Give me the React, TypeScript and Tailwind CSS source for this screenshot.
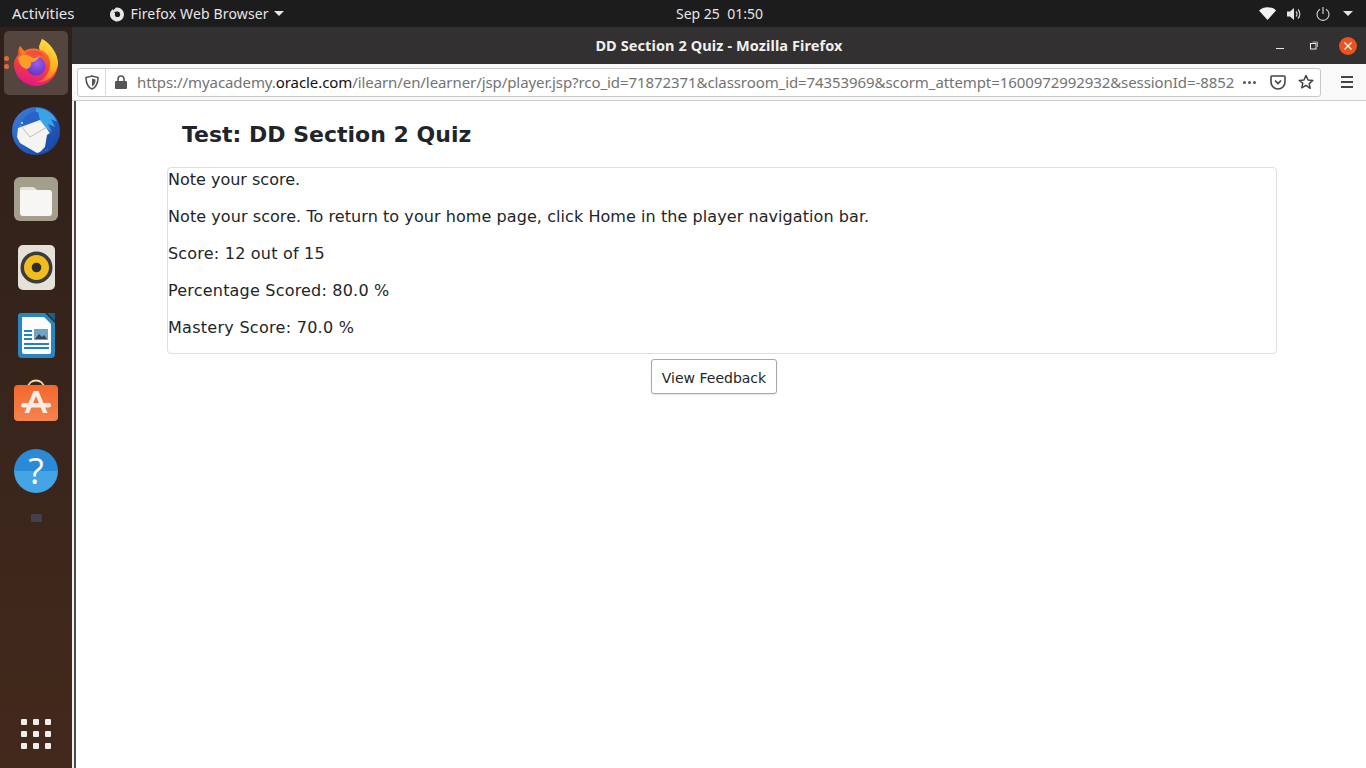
import React from "react";

const ui = "font-['Noto_Sans','Open_Sans',sans-serif]";

function FirefoxIcon() {
  return (
    <svg width="46" height="48" viewBox="0 0 46 48">
      <defs>
        <linearGradient id="ffBody" x1="0.7" y1="0" x2="0.4" y2="1">
          <stop offset="0" stopColor="#ff9a26" />
          <stop offset="0.55" stopColor="#f5452f" />
          <stop offset="1" stopColor="#e3158c" />
        </linearGradient>
        <linearGradient id="ffFlame" x1="0.6" y1="0" x2="0.3" y2="1">
          <stop offset="0" stopColor="#ffe14a" />
          <stop offset="0.55" stopColor="#ffb21f" />
          <stop offset="1" stopColor="#ff5a2a" />
        </linearGradient>
        <radialGradient id="ffGlobe" cx="0.55" cy="0.35" r="0.75">
          <stop offset="0" stopColor="#a05cf0" />
          <stop offset="1" stopColor="#5a2fc0" />
        </radialGradient>
      </defs>
      <path d="M29 1C27 7 25 9 27 12 20 9 13 11 10 14L7 8C5 11 5 14 5.500 16 2 20 1 24 1 26A22 22 0 0 0 45 26C45 16 38 6 29 1Z" fill="url(#ffBody)" />
      <path d="M29 1C27 6 25 9 27 12 36 14 39 24 36 32 34 38 30 42 24 44 35 45 43 37 45 26 45 16 38 6 29 1Z" fill="url(#ffFlame)" />
      <circle cx="23" cy="28" r="9.500" fill="url(#ffGlobe)" />
      <path d="M13 15C20 10 30 12 33 21 29 17 24 16 20 18Z" fill="#f0503a" />
      <path d="M5 20C9 15 14 16 18 19 20 20 24 20 27 18 24 23 21 24 18 24 19 27 16 31 14 31 9 30 6 26 5 20Z" fill="#ff9d2a" />
      <path d="M7 8C6 12 7 15 9 18L13 15Z" fill="#ff7a1f" />
    </svg>
  );
}

function Thunderbird() {
  return (
    <svg width="48" height="48" viewBox="0 0 48 48">
      <defs>
        <linearGradient id="tb" x1="0" y1="0" x2="1" y2="1">
          <stop offset="0" stopColor="#3f7fe0" />
          <stop offset="1" stopColor="#12409e" />
        </linearGradient>
      </defs>
      <circle cx="24" cy="24" r="24" fill="url(#tb)" />
      <path d="M24 1c10 0 18 6 21 14l-6-3 4 8-7-3 4 8-8-5-8-8z" fill="#3aa2e6" />
      <path d="M8 18C12 9 18 5 26 5l2 8-20 8z" fill="#2a62c8" />
      <path d="M6 21l22-8 10 13-3 17-10 3-17-10-3-6z" fill="#f6f4f1" />
      <path d="M8 18l10 12 17-10" fill="none" stroke="#aeb0b2" strokeWidth="0.800" />
      <path d="M35 28l3-2 1 9-4 8-8 3 6-6z" fill="#1a4fb0" />
      <circle cx="10" cy="16" r="1.200" fill="#9ad0ee" />
    </svg>
  );
}

function Files() {
  return (
    <svg width="44" height="44" viewBox="0 0 44 44">
      <rect width="44" height="44" rx="6" fill="#a49f8d" />
      <path d="M6 13a3 3 0 0 1 3-3h10l4 3h12a3 3 0 0 1 3 3v20a3 3 0 0 1-3 3H9a3 3 0 0 1-3-3z" fill="#f7f6f5" />
      <path d="M6 13a3 3 0 0 1 3-3h10l4 3z" fill="#e4e1da" />
    </svg>
  );
}

function Rhythmbox() {
  return (
    <svg width="37" height="45" viewBox="0 0 37 45">
      <rect width="37" height="45" rx="5" fill="#e5e1d8" />
      <circle cx="18.500" cy="22.500" r="16" fill="#3b3a3c" />
      <circle cx="18.500" cy="22.500" r="12.500" fill="#f0bd1f" />
      <circle cx="18.500" cy="22.500" r="4.800" fill="#2e2d2b" />
    </svg>
  );
}

function Writer() {
  return (
    <svg width="37" height="45" viewBox="0 0 37 45">
      <path d="M3 0h24l10 10v31a4 4 0 0 1-4 4H4a4 4 0 0 1-4-4V3a3 3 0 0 1 3-3z" fill="#2a86c0" />
      <path d="M29 0l8 8V0z" fill="#1c5e8c" />
      <path d="M4 4h22l7 7v28a2 2 0 0 1-2 2H6a2 2 0 0 1-2-2z" fill="#fdfdfd" />
      <rect x="6" y="17" width="8" height="2" fill="#1f83bd" />
      <rect x="6" y="21" width="8" height="2" fill="#1f83bd" />
      <rect x="6" y="25" width="8" height="2" fill="#1f83bd" />
      <rect x="16" y="16" width="14" height="11" fill="#6fa3c7" />
      <path d="M17 26l4-5 3 3 2-2 3 4z" fill="#3a4350" />
      <rect x="6" y="30" width="25" height="2" fill="#1f83bd" />
      <rect x="6" y="34" width="25" height="2" fill="#1f83bd" />
    </svg>
  );
}

function AppStore() {
  return (
    <svg width="46" height="44" viewBox="0 0 46 44">
      <defs>
        <linearGradient id="as" x1="0" y1="0" x2="0" y2="1">
          <stop offset="0" stopColor="#f2682d" />
          <stop offset="1" stopColor="#f58350" />
        </linearGradient>
      </defs>
      <path d="M15 9c0-10 16-10 16 0" fill="none" stroke="#f8dca8" strokeWidth="1.800" />
      <rect x="1" y="6" width="44" height="36" rx="4" fill="url(#as)" />
      <path d="M20.500 12h5l9 22h-4.500L23 17l-7 17h-4.500z" fill="#fbeee6" />
      <rect x="8" y="24" width="30" height="4.500" rx="2.200" fill="#fbeee6" />
    </svg>
  );
}

function Help() {
  return (
    <div className="flex h-[44px] w-[44px] items-center justify-center rounded-full bg-[linear-gradient(#2a8ad8_50%,#44a4e4_50%)]">
      <span className="font-['Open_Sans',sans-serif] text-[36px] font-normal leading-none text-white">?</span>
    </div>
  );
}

function Dock() {
  return (
    <aside className="flex h-full w-[72px] shrink-0 flex-col items-center bg-gradient-to-b from-[#2e201a] via-[#38251b] to-[#43291c]">
      <div className="mt-[4px] flex h-[64px] w-[64px] items-start rounded-[5px] bg-[#54463e] pl-[9px] pt-[7px]">
        <FirefoxIcon />
      </div>
      <div className="mt-[12px] flex h-[48px] items-center"><Thunderbird /></div>
      <div className="mt-[22px] flex h-[44px] items-center"><Files /></div>
      <div className="mt-[24px] flex h-[45px] items-center"><Rhythmbox /></div>
      <div className="mt-[23px] flex h-[45px] items-center"><Writer /></div>
      <div className="mt-[21px] flex h-[44px] items-center"><AppStore /></div>
      <div className="mt-[26px]"><Help /></div>
      <div className="mt-[21px] h-[8px] w-[11px] rounded-[1px] bg-[#42404e]" />
      <div className="mt-auto mb-[19px] grid grid-cols-3 gap-x-[6px] gap-y-[6px]">
        {Array.from({ length: 9 }).map((_, i) => (
          <div key={i} className="h-[6px] w-[6px] rounded-[1px] bg-[#eeeeec]" />
        ))}
      </div>
    </aside>
  );
}

function TopBar() {
  return (
    <header className={`relative flex h-[27px] shrink-0 items-center bg-[#1c1c1c] text-[14px] text-[#e6e6e6] ${ui}`}>
      <span className="ml-[12px] text-[15px]">Activities</span>
      <svg className="ml-[34px]" width="16" height="16" viewBox="0 0 16 16">
        <path d="M8 1.500a7 7 0 1 1-6.800 5.300C2 5 3 4 3.500 3l.8 1.500C5 3 6.500 2.500 7 1.500z" fill="#e6e6e6" />
        <circle cx="8.500" cy="8.500" r="2.600" fill="#1c1c1c" />
        <path d="M5 6.500c2-1.500 5-1.200 6 .8-1.500-.6-3-.4-4 .4z" fill="#1c1c1c" />
      </svg>
      <span className="ml-[6px] tracking-[0.15px]">Firefox Web Browser</span>
      <div className="ml-[5px] h-0 w-0 border-x-[5px] border-t-[5px] border-x-transparent border-t-[#e6e6e6]" />
      <span className="absolute left-[676px]">Sep 25&nbsp; 01:50</span>
      <div className="ml-auto mr-[13px] flex items-center">
        <svg width="17" height="13" viewBox="0 0 17 13"><path d="M0 3.500C4.500-1 12.500-1 17 3.500L8.500 13z" fill="#f2f2f2" /></svg>
        <svg className="ml-[11px]" width="16" height="14" viewBox="0 0 16 14">
          <path d="M0 4.500h3L7 1v12L3 9.500H0z" fill="#e6e6e6" />
          <path d="M9 4.500a3.500 3.500 0 0 1 0 5M11 2.500a6.500 6.500 0 0 1 0 9" fill="none" stroke="#d0d0d0" strokeWidth="1.200" />
        </svg>
        <svg className="ml-[13px]" width="14" height="14" viewBox="0 0 14 14">
          <path d="M4 2.200a6 6 0 1 0 6 0" fill="none" stroke="#dcdcdc" strokeWidth="1.100" />
          <path d="M7 0v7" stroke="#dcdcdc" strokeWidth="1.100" />
        </svg>
        <div className="ml-[13px] h-0 w-0 border-x-[5px] border-t-[5px] border-x-transparent border-t-[#e6e6e6]" />
      </div>
    </header>
  );
}

function TitleBar() {
  return (
    <div className={`relative flex h-[37px] shrink-0 items-center justify-center bg-[#323030] text-[14.500px] font-bold tracking-[0.1px] text-[#f0f0f0] ${ui}`}>
      <span>DD Section 2 Quiz - Mozilla Firefox</span>
      <div className="absolute right-[9px] flex items-center">
        <div className="mr-[26px] mt-[6px] h-[1px] w-[8px] bg-[#e8e8e8]" />
        <svg className="mr-[21px]" width="8" height="9" viewBox="0 0 8 9">
          <rect x="0.500" y="2.500" width="5.500" height="5.500" fill="none" stroke="#eee" />
          <path d="M2.500 1H7.500V6" fill="none" stroke="#aaa" />
        </svg>
        <div className="flex h-[18px] w-[18px] items-center justify-center rounded-full bg-[#e95420]">
          <svg width="8" height="8" viewBox="0 0 8 8"><path d="M0.500 0.500l7 7M7.500 0.500l-7 7" stroke="#fff" strokeWidth="1.200" /></svg>
        </div>
      </div>
    </div>
  );
}

function NavBar() {
  return (
    <div className={`flex h-[37px] shrink-0 items-center border-b border-[#cfcfcf] bg-[#f9f9fa] pl-[5px] pr-[13px] text-[15px] text-[#737373] ${ui}`}>
      <div className="flex h-[29px] min-w-0 flex-1 items-center rounded-[3px] border border-[#c8c8c8] bg-white">
        <svg className="ml-[7px] shrink-0" width="14" height="15" viewBox="0 0 14 15">
          <path d="M7 1l6 1.500c0 5-1 9.500-6 11.500C2 12 1 7.500 1 2.500z" fill="none" stroke="#555" strokeWidth="1.600" />
          <path d="M7 3.500l3.500 1c0 3-.6 5.500-3.500 7z" fill="#555" />
        </svg>
        <div className="ml-[6px] h-[26px] w-px shrink-0 bg-[#d8d8d8]" />
        <svg className="ml-[9px] shrink-0" width="12" height="14" viewBox="0 0 12 14">
          <path d="M3 6V4a3 3 0 0 1 6 0v2" fill="none" stroke="#555" strokeWidth="1.600" />
          <rect y="6" width="12" height="8" rx="1" fill="#555" />
        </svg>
        <div className="ml-[10px] min-w-0 flex-1 overflow-hidden whitespace-nowrap tracking-[-0.08px]">
          https://myacademy.<span className="text-[#111]">oracle.com</span>/ilearn/en/learner/jsp/player.jsp?rco_id=71872371&amp;classroom_id=74353969&amp;scorm_attempt=1600972992932&amp;sessionId=-8852
        </div>
        <div className="ml-[8px] flex shrink-0 gap-[2px]">
          <i className="h-[3px] w-[3px] rounded-full bg-[#555]" />
          <i className="h-[3px] w-[3px] rounded-full bg-[#555]" />
          <i className="h-[3px] w-[3px] rounded-full bg-[#555]" />
        </div>
        <svg className="ml-[14px] shrink-0" width="16" height="15" viewBox="0 0 16 15">
          <path d="M2 1h12a1 1 0 0 1 1 1v5a7 7 0 0 1-14 0V2a1 1 0 0 1 1-1z" fill="none" stroke="#444" strokeWidth="1.600" />
          <path d="M5 5.500l3 3 3-3" fill="none" stroke="#444" strokeWidth="1.700" />
        </svg>
        <svg className="ml-[12px] mr-[6px] shrink-0" width="16" height="16" viewBox="0 0 16 16">
          <path d="M8 1.500l2 4.400 4.800.5-3.600 3.200 1 4.700L8 11.400l-4.200 2.400 1-4.700L1.200 6.400 6 5.900z" fill="none" stroke="#444" strokeWidth="1.500" strokeLinejoin="round" />
        </svg>
      </div>
      <div className="ml-[20px] flex w-[12px] shrink-0 flex-col gap-[3px]">
        <i className="h-[2px] bg-[#444]" />
        <i className="h-[2px] bg-[#444]" />
        <i className="h-[2px] bg-[#444]" />
      </div>
    </div>
  );
}

function Content() {
  return (
    <main className="flex min-h-0 flex-1 border-l-[2px] border-[#f0f0f0] bg-white font-['DejaVu_Sans',sans-serif] text-[#212529]">
      <div className="w-[2px] shrink-0 bg-[#4a4a4a]" />
      <div className="flex-1 pl-[91px] pr-[89px]">
        <h1 className="ml-[15px] mt-[16px] text-[22px] font-bold leading-[36px]">Test: DD Section 2 Quiz</h1>
        <div className="mt-[14px] h-[187px] rounded-[4px] border border-[#dfdfdf] text-[16px] leading-[24px]">
          <p>Note your score.</p>
          <p className="mt-[13px] tracking-[0.07px]">Note your score. To return to your home page, click Home in the player navigation bar.</p>
          <p className="mt-[13px] tracking-[0.21px]">Score: 12 out of 15</p>
          <p className="mt-[13px] tracking-[0.2px]">Percentage Scored: 80.0 %</p>
          <p className="mt-[13px] tracking-[0.28px]">Mastery Score: 70.0 %</p>
        </div>
        <div className="mt-[5px] flex justify-center pr-[16px]">
          <button className="h-[35px] w-[126px] rounded-[3px] border border-[#a8a8a8] bg-white pt-[3px] text-[14px] text-[#212529] shadow-[0_1px_2px_rgba(0,0,0,0.1)]">
            View Feedback
          </button>
        </div>
      </div>
    </main>
  );
}

export default function App() {
  return (
    <div className="flex h-[768px] w-[1366px] flex-col overflow-hidden">
      <TopBar />
      <div className="relative flex min-h-0 flex-1">
        <Dock />
        <div className="absolute left-[4px] top-[29px] flex flex-col gap-[3px]">
          <i className="block h-[5px] w-[5px] rounded-full bg-[#e9692c]" />
          <i className="block h-[5px] w-[5px] rounded-full bg-[#e9692c]" />
        </div>
        <div className="flex min-w-0 flex-1 flex-col">
          <TitleBar />
          <NavBar />
          <Content />
        </div>
      </div>
    </div>
  );
}
